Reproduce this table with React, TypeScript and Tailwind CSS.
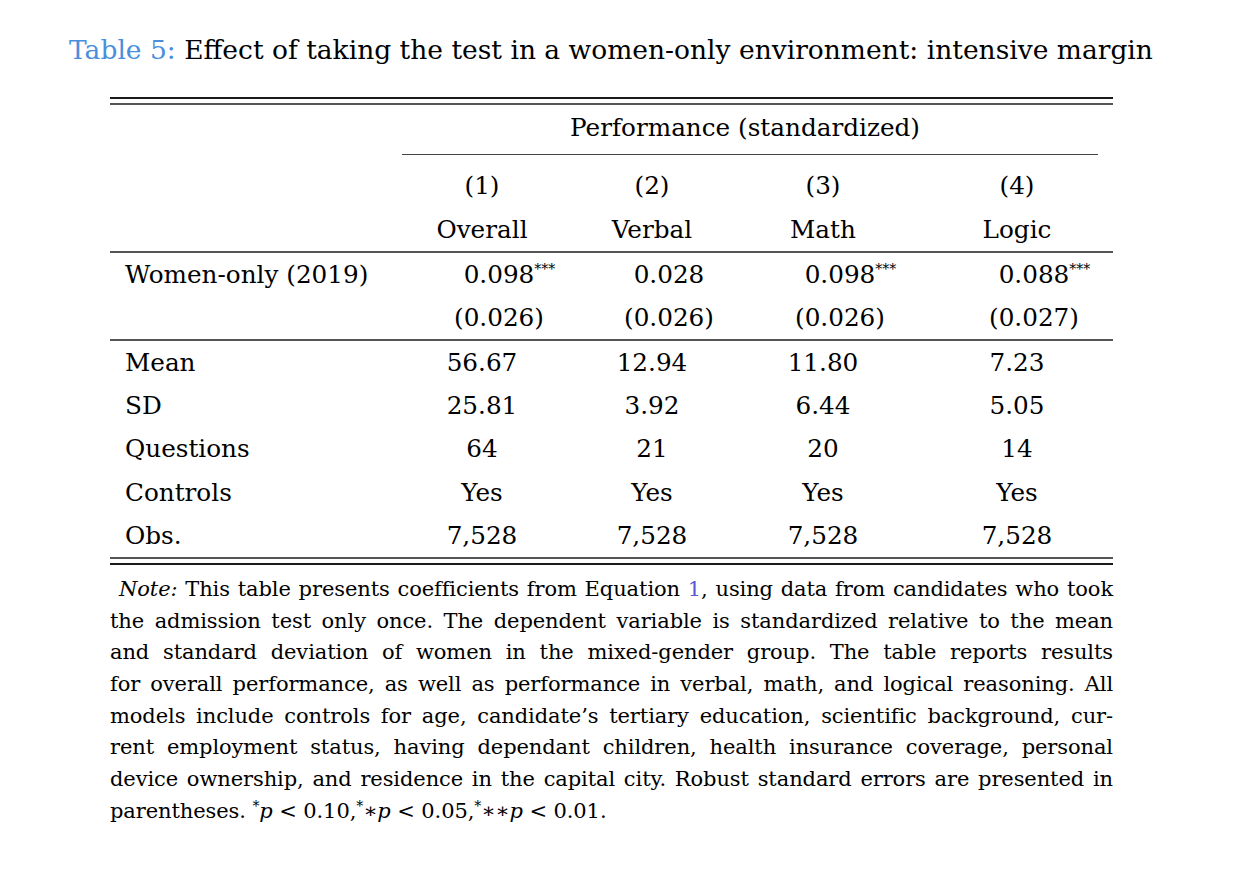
const serif = { fontFamily: '"DejaVu Serif", "Liberation Serif", serif' };

type Coef = { v: string; stars?: string };

const coefs: Coef[] = [
  { v: "0.098", stars: "***" },
  { v: "0.028" },
  { v: "0.098", stars: "***" },
  { v: "0.088", stars: "***" },
];
const ses = ["(0.026)", "(0.026)", "(0.026)", "(0.027)"];

const stats = [
  { label: "Mean", vals: ["56.67", "12.94", "11.80", "7.23"] },
  { label: "SD", vals: ["25.81", "3.92", "6.44", "5.05"] },
  { label: "Questions", vals: ["64", "21", "20", "14"] },
  { label: "Controls", vals: ["Yes", "Yes", "Yes", "Yes"] },
  { label: "Obs.", vals: ["7,528", "7,528", "7,528", "7,528"] },
];

// column 3 is a bit wider than the others, pad it so the text sits where LaTeX put it
const cellPad = ["", "", "pr-[12px]", ""];

function Row({ label, cells, h, shift }: { label?: string; cells: React.ReactNode[]; h: string; shift?: boolean }) {
  return (
    <div className={`grid grid-cols-[287px_170px_170px_184px_192px] items-center ${h}`}>
      <div className="pl-[15px]">{label}</div>
      {cells.map((c, i) => (
        <div key={i} className={`text-center ${cellPad[i]} ${shift ? "pl-[34px]" : ""}`}>
          {c}
        </div>
      ))}
    </div>
  );
}

const lines = [
  "the admission test only once. The dependent variable is standardized relative to the mean",
  "and standard deviation of women in the mixed-gender group.  The table reports results",
  "for overall performance, as well as performance in verbal, math, and logical reasoning. All",
  "models include controls for age, candidate’s tertiary education, scientific background, cur-",
  "rent employment status, having dependant children, health insurance coverage, personal",
  "device ownership, and residence in the capital city. Robust standard errors are presented in",
];

export default function App() {
  return (
    <div className="w-[1246px] h-[874px] bg-white text-black overflow-hidden" style={serif}>
      <div className="ml-[69px] mt-[31px] text-[26.5px] leading-[38px] whitespace-nowrap">
        <span className="text-[#4a8fdc]">Table 5:</span> Effect of taking the test in a women-only environment: intensive
        margin
      </div>

      <div className="ml-[110px] w-[1003px] mt-[28px] text-[24.7px]">
        <div className="h-[2px] bg-[#1a1a1a]" />
        <div className="h-[2px] bg-[#555] mt-[4px]" />

        <div className="grid grid-cols-[287px_716px] h-[46px] items-center">
          <div />
          <div className="text-center pr-[20px]">Performance (standardized)</div>
        </div>
        <div className="grid grid-cols-[292px_696px] mt-[3px]">
          <div />
          <div className="h-[1px] bg-[#444]" />
        </div>

        <div className="mt-[9px]">
          <Row cells={["(1)", "(2)", "(3)", "(4)"]} h="h-[44px]" />
          <Row cells={["Overall", "Verbal", "Math", "Logic"]} h="h-[43px]" />
        </div>
        <div className="h-[2px] bg-[#555]" />

        <Row
          label="Women-only (2019)"
          h="h-[43px]"
          shift
          cells={coefs.map((c, i) => (
            <span key={i} className="relative">
              {c.v}
              {c.stars && <span className="absolute left-full top-[2px] text-[14px] leading-none">{c.stars}</span>}
            </span>
          ))}
        />
        <Row cells={ses} h="h-[43px]" shift />
        <div className="h-[2px] bg-[#555]" />

        {stats.map((s) => (
          <Row key={s.label} label={s.label} cells={s.vals} h="h-[43.2px]" />
        ))}

        <div className="h-[2px] bg-[#555]" />
        <div className="h-[2px] bg-[#1a1a1a] mt-[4px]" />

        <div className="mt-[9px] text-[21px] leading-[31.7px] tracking-[-0.1px]">
          <div className="pl-[9px] text-justify [text-align-last:justify]">
            <i>Note:</i> This table presents coefficients from Equation <span className="text-[#5a5ad2]">1</span>, using
            data from candidates who took
          </div>
          {lines.map((l) => (
            <div key={l} className="text-justify [text-align-last:justify]">
              {l}
            </div>
          ))}
          <div>
            parentheses. <sup className="text-[14px]">*</sup>
            <i>p</i> &lt; 0.10,<sup className="text-[14px]">*</sup>∗<i>p</i> &lt; 0.05,
            <sup className="text-[14px]">*</sup>∗∗<i>p</i> &lt; 0.01.
          </div>
        </div>
      </div>
    </div>
  );
}
